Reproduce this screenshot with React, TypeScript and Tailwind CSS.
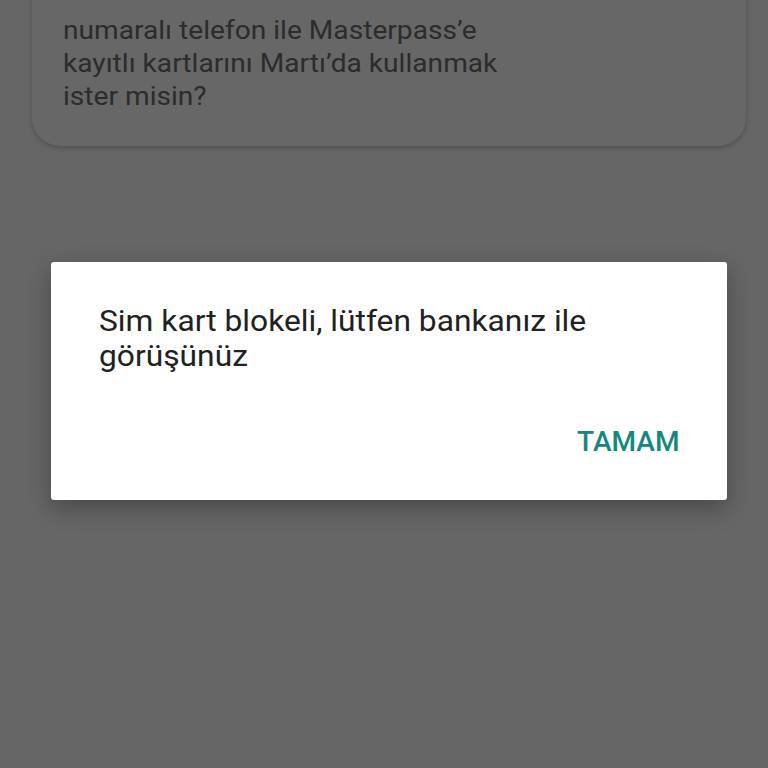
import React from 'react';

export default function App() {
  return (
    <div className="relative h-[768px] w-[768px] overflow-hidden bg-[#666666] font-['Roboto',sans-serif]">
      {/* card under the scrim */}
      <div className="mx-[32px] mt-[-40px] w-[714px] rounded-b-[28px] bg-[#676767] pb-[33px] pl-[31px] pt-[54px] shadow-[0_2px_5px_rgba(0,0,0,0.22)]">
        <p className="origin-left scale-x-[1.125] text-[25px] leading-[33px] text-[#2c2c2c]">
          numaralı telefon ile Masterpass’e
          <br />
          kayıtlı kartlarını Martı’da kullanmak
          <br />
          ister misin?
        </p>
      </div>

      {/* modal */}
      <div className="absolute inset-0 pt-[262px]">
        <div className="ml-[51px] flex h-[238px] w-[676px] flex-col rounded-[3px] bg-white pl-[48px] pr-[48px] pt-[42px] shadow-[0_8px_24px_rgba(0,0,0,0.3)]">
          <p className="origin-left scale-x-[1.095] text-[29px] leading-[35px] text-[#212121]">
            Sim kart blokeli, lütfen bankanız ile
            <br />
            görüşünüz
          </p>
          <div className="mt-auto mb-[42px] flex justify-end">
            <button className="origin-right scale-x-[1.04] text-[27px] font-medium leading-[32px] text-[#12897c]">TAMAM</button>
          </div>
        </div>
      </div>
    </div>
  );
}
